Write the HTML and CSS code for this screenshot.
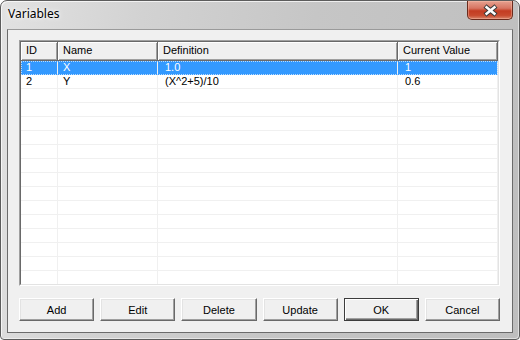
FILE: index.html
```html
<!DOCTYPE html>
<html lang="en">
<head>
    <meta charset="UTF-8">
    <title>Variables</title>
    <link rel="stylesheet" href="styles.css">
</head>
<body>
  <div class="window">
    <div class="titlebar">
      <span class="title">Variables</span>
      <div class="close">
        <svg width="44" height="18" viewBox="0 0 44 18">
          <path d="M17 5 L28 14 M28 5 L17 14" stroke="#3b3b3b" stroke-width="4.6" fill="none"/>
          <path d="M17.6 5.5 L27.4 13.5 M27.4 5.5 L17.6 13.5" stroke="#fff" stroke-width="2.4" fill="none"/>
        </svg>
      </div>
    </div>

    <div class="client">
      <div class="list">
        <div class="list-inner">
          <div class="row head">
            <div class="cell">ID</div>
            <div class="cell">Name</div>
            <div class="cell">Definition</div>
            <div class="cell">Current Value</div>
          </div>
          <div class="row selected">
            <div class="cell">1</div>
            <div class="cell">X</div>
            <div class="cell def">1.0</div>
            <div class="cell val">1</div>
          </div>
          <div class="row">
            <div class="cell">2</div>
            <div class="cell">Y</div>
            <div class="cell def">(X^2+5)/10</div>
            <div class="cell val">0.6</div>
          </div>
          <div class="row"><div class="cell"></div><div class="cell"></div><div class="cell"></div><div class="cell"></div></div>
          <div class="row"><div class="cell"></div><div class="cell"></div><div class="cell"></div><div class="cell"></div></div>
          <div class="row"><div class="cell"></div><div class="cell"></div><div class="cell"></div><div class="cell"></div></div>
          <div class="row"><div class="cell"></div><div class="cell"></div><div class="cell"></div><div class="cell"></div></div>
          <div class="row"><div class="cell"></div><div class="cell"></div><div class="cell"></div><div class="cell"></div></div>
          <div class="row"><div class="cell"></div><div class="cell"></div><div class="cell"></div><div class="cell"></div></div>
          <div class="row"><div class="cell"></div><div class="cell"></div><div class="cell"></div><div class="cell"></div></div>
          <div class="row"><div class="cell"></div><div class="cell"></div><div class="cell"></div><div class="cell"></div></div>
          <div class="row"><div class="cell"></div><div class="cell"></div><div class="cell"></div><div class="cell"></div></div>
          <div class="row"><div class="cell"></div><div class="cell"></div><div class="cell"></div><div class="cell"></div></div>
          <div class="row"><div class="cell"></div><div class="cell"></div><div class="cell"></div><div class="cell"></div></div>
          <div class="row"><div class="cell"></div><div class="cell"></div><div class="cell"></div><div class="cell"></div></div>
          <div class="row"><div class="cell"></div><div class="cell"></div><div class="cell"></div><div class="cell"></div></div>
          <div class="row"><div class="cell"></div><div class="cell"></div><div class="cell"></div><div class="cell"></div></div>
          <div class="row"><div class="cell"></div><div class="cell"></div><div class="cell"></div><div class="cell"></div></div>
        </div>
      </div>

      <div class="buttons">
        <button class="btn">Add</button>
        <button class="btn">Edit</button>
        <button class="btn">Delete</button>
        <button class="btn">Update</button>
        <button class="btn default">OK</button>
        <button class="btn">Cancel</button>
      </div>
    </div>
  </div>
</body>
</html>
```

FILE: styles.css
```css
body {
  margin: 0;
  background: #fff;
  font-family: 'Liberation Sans', Arial, sans-serif;
  font-size: 11px;
}

.window {
  width: 520px;
  height: 340px;
  box-sizing: border-box;
  border: 1px solid #5c5c5c;
  border-radius: 7px 7px 4px 4px;
  background: linear-gradient(100deg, #e2e2e2 0%, #d2d2d2 25%, #c6c6c6 55%, #bebebe 100%);
  box-shadow: inset 1px 1px 0 rgba(255, 255, 255, 0.7), inset -1px -1px 0 rgba(255, 255, 255, 0.5);
  display: flex;
  flex-direction: column;
}

.titlebar {
  height: 28px;
  display: flex;
  align-items: flex-start;
  padding: 0 6px 0 7px;
}

.title {
  margin-top: 5px;
  font-family: 'Noto Sans', 'Open Sans', sans-serif;
  font-size: 12px;
  line-height: 16px;
  color: #000;
  text-shadow: 0 0 6px #fff, 0 0 3px #fff;
}

.close {
  margin-left: auto;
  width: 44px;
  height: 18px;
  border: 1px solid #6a2b1d;
  border-top: none;
  border-radius: 0 0 5px 5px;
  background: linear-gradient(#e6a190, #d77562 40%, #c33c22 55%, #c84a2e 80%, #d8856b);
  box-shadow: inset 0 0 0 1px rgba(255, 200, 180, 0.4);
}

.close svg {
  display: block;
}

.client {
  flex: 1;
  margin: 0 6px 6px;
  border: 1px solid #6b6b6b;
  border-top-color: #9a9a9a;
  background: #f0f0f0;
  padding: 10px 12px 11px 11px;
  display: flex;
  flex-direction: column;
}

.list {
  height: 246px;
  box-sizing: border-box;
  border: 1px solid;
  border-color: #a0a0a0 #fff #fff #a0a0a0;
}

.list-inner {
  height: 100%;
  box-sizing: border-box;
  border: 1px solid;
  border-color: #696969 #e3e3e3 #e3e3e3 #696969;
  background: #fff;
  overflow: hidden;
}

.row {
  display: grid;
  grid-template-columns: 37px 100px 240px 1fr;
  height: 14px;
  line-height: 13px;
}

.row .cell {
  border-right: 1px solid #f0f0f0;
  border-bottom: 1px solid #f0f0f0;
  padding-left: 5px;
  white-space: nowrap;
  overflow: hidden;
}

.row .def {
  padding-left: 7px;
}

.row .val {
  padding-left: 7px;
}

.row.head {
  height: 19px;
  line-height: 17px;
}

.row.head .cell {
  background: #f0f0f0;
  border-right: 1px solid #696969;
  border-bottom: 1px solid #696969;
  box-shadow: inset 1px 1px 0 #fff, inset -1px -1px 0 #a0a0a0;
  padding-left: 5px;
}

.row.selected {
  background: #3399ff;
  color: #fff;
  outline: 1px dotted #b9dcff;
  outline-offset: -1px;
}

.row.selected .cell {
  border-bottom-color: #3399ff;
}

.buttons {
  margin-top: 12px;
  display: flex;
  gap: 6px;
}

.btn {
  flex: 1;
  height: 23px;
  padding: 0;
  font-family: 'Liberation Sans', Arial, sans-serif;
  font-size: 11px;
  color: #000;
  background: #f0f0f0;
  border: 1px solid;
  border-color: #fff #696969 #696969 #fff;
  box-shadow: inset -1px -1px 0 #a0a0a0, inset 1px 1px 0 #e3e3e3;
}

.btn.default {
  border: 1px solid #3c3c3c;
  box-shadow: inset 1px 1px 0 #fff, inset -1px -1px 0 #696969, inset -2px -2px 0 #a0a0a0;
}
```
